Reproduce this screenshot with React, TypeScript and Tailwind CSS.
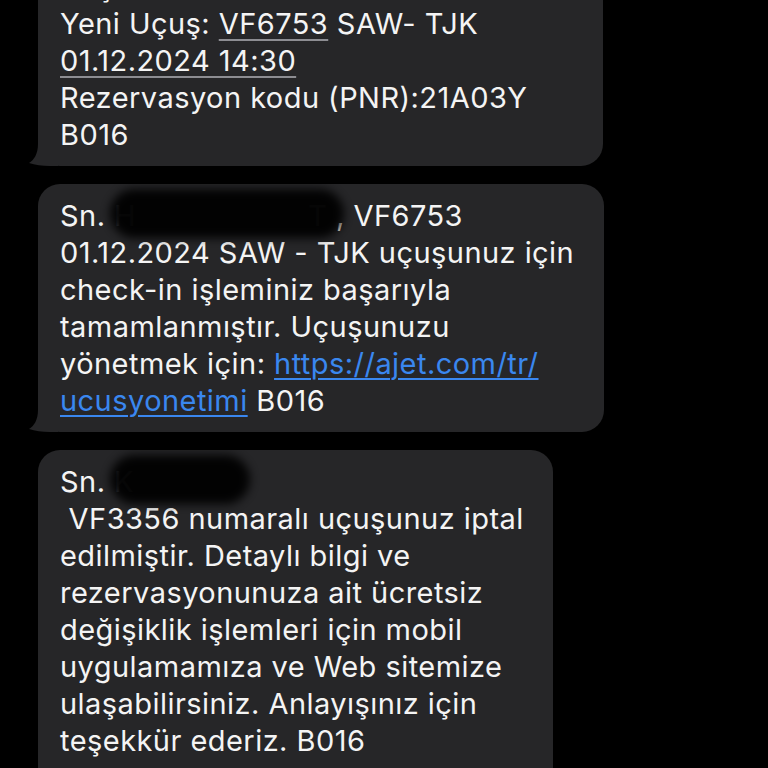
import React from "react";

const font = { fontFamily: "Inter, 'Noto Sans', sans-serif" };

function Tail() {
  return (
    <svg
      className="absolute -left-[10px] bottom-0"
      width="30"
      height="26"
      viewBox="0 0 30 26"
    >
      <path
        d="M10 0 H30 V26 H22 C14 26 7 25 1 23 C6 20 10 14 10 4 Z"
        fill="#262628"
      />
    </svg>
  );
}

function Redacted({ width, children }: { width: number; children: React.ReactNode }) {
  return (
    <span className="relative inline-block align-top" style={{ width }}>
      <span className="text-[#5a5a5e]">{children}</span>
      <span className="absolute -left-1 -right-2 -top-2 -bottom-1 rounded-full bg-black blur-[5px] opacity-[0.93]" />
    </span>
  );
}

function Bubble({
  className,
  children,
}: {
  className: string;
  children: React.ReactNode;
}) {
  return (
    <div
      className={`relative shrink-0 rounded-[22px] bg-[#262628] pl-[22px] pr-4 py-[13px] text-[29px] leading-[37px] tracking-[0.45px] text-[#f4f4f4] whitespace-pre ${className}`}
    >
      {children}
      <Tail />
    </div>
  );
}

const dd = "underline decoration-[#8d8d92] decoration-2 underline-offset-[5px]";
const link = "text-[#3a87ef] underline decoration-[#3a87ef] decoration-[1.5px] underline-offset-[4px]";

export default function App() {
  return (
    <div className="h-[768px] w-[768px] overflow-hidden bg-black" style={font}>
      <div className="flex flex-col gap-[18px] pl-[38px]">
        <Bubble className="-mt-[45px] w-[565px]">
          <div>Seçili</div>
          <div>
            Yeni Uçuş: <span className={dd}>VF6753</span> SAW- TJK
          </div>
          <div>
            <span className={dd}>01.12.2024 14:30</span>
          </div>
          <div>Rezervasyon kodu (PNR):21A03Y</div>
          <div>B016</div>
        </Bubble>

        <Bubble className="w-[566px]">
          <div>
            Sn. <Redacted width={222}>{"H                    T"}</Redacted>, VF6753
          </div>
          <div>01.12.2024 SAW - TJK uçuşunuz için</div>
          <div>check-in işleminiz başarıyla</div>
          <div>tamamlanmıştır. Uçuşunuzu</div>
          <div>
            yönetmek için: <span className={link}>https://ajet.com/tr/</span>
          </div>
          <div>
            <span className={link}>ucusyonetimi</span> B016
          </div>
        </Bubble>

        <Bubble className="w-[515px]">
          <div>
            Sn. <Redacted width={128}>{"K"}</Redacted>
          </div>
          <div> VF3356 numaralı uçuşunuz iptal</div>
          <div>edilmiştir. Detaylı bilgi ve</div>
          <div>rezervasyonunuza ait ücretsiz</div>
          <div>değişiklik işlemleri için mobil</div>
          <div>uygulamamıza ve Web sitemize</div>
          <div>ulaşabilirsiniz. Anlayışınız için</div>
          <div>teşekkür ederiz. B016</div>
          <div> </div>
        </Bubble>
      </div>
    </div>
  );
}
